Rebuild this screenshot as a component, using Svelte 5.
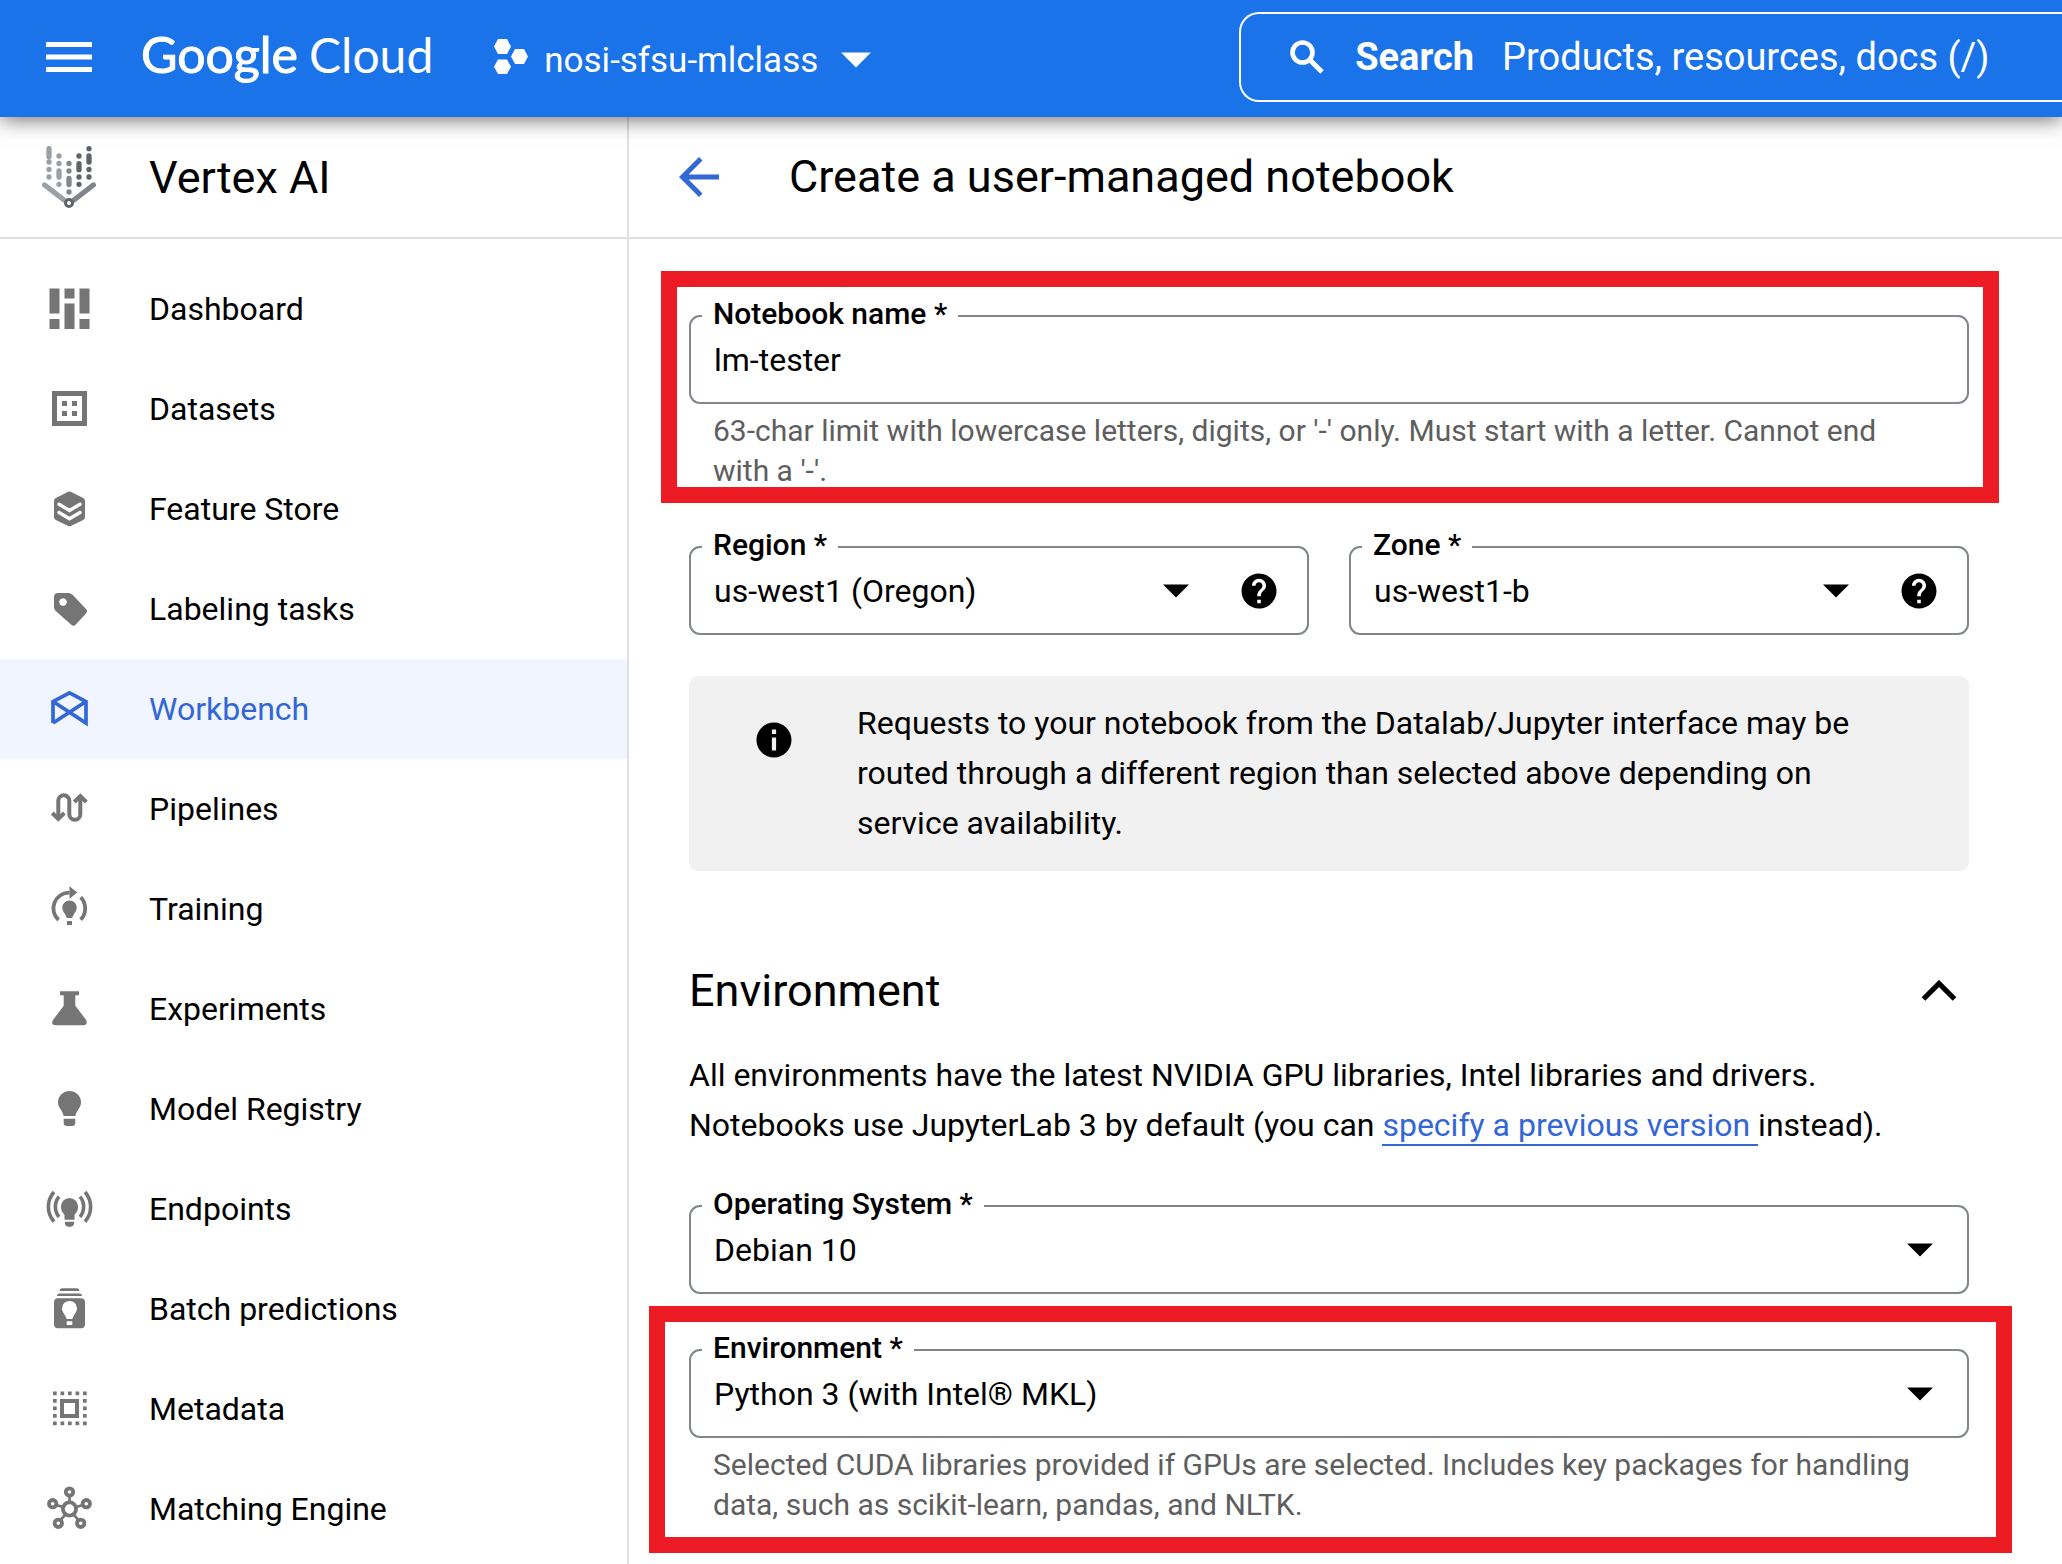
<script>
  const menu = [
    { name: 'Dashboard', icon: 'dashboard' },
    { name: 'Datasets', icon: 'datasets' },
    { name: 'Feature Store', icon: 'features' },
    { name: 'Labeling tasks', icon: 'label' },
    { name: 'Workbench', icon: 'workbench', active: true },
    { name: 'Pipelines', icon: 'pipelines' },
    { name: 'Training', icon: 'training' },
    { name: 'Experiments', icon: 'flask' },
    { name: 'Model Registry', icon: 'bulb' },
    { name: 'Endpoints', icon: 'endpoints' },
    { name: 'Batch predictions', icon: 'batch' },
    { name: 'Metadata', icon: 'metadata' },
    { name: 'Matching Engine', icon: 'matching' }
  ];

  // Dotted frame of the metadata icon: a 5 x 5 grid without its middle
  const frameDots = [];
  for (let r = 0; r < 5; r++) {
    for (let c = 0; c < 5; c++) {
      if (r === 0 || r === 4 || c === 0 || c === 4) {
        frameDots.push({ x: 8 + c * 7.5, y: 6.5 + r * 7.5 });
      }
    }
  }

  const nodes = [
    [24.5, 7],
    [7.7, 18.7],
    [41.3, 18.7],
    [13.3, 38.3],
    [35.7, 38.3]
  ];

  let notebookName = $state('lm-tester');
  let open = $state(true);
</script>

{#snippet arrow()}
  <svg class="arrow" viewBox="0 0 26 14" aria-hidden="true"><path d="M0 0.5h26L13 13.5z" /></svg>
{/snippet}

{#snippet help(text)}
  <button class="help" type="button" aria-label={text}>
    <svg viewBox="0 0 24 24" aria-hidden="true">
      <path
        d="M12 2C6.48 2 2 6.48 2 12s4.48 10 10 10 10-4.48 10-10S17.52 2 12 2zm1 17h-2v-2h2v2zm2.07-7.75l-.9.92C13.45 12.9 13 13.5 13 15h-2v-.5c0-1.1.45-2.1 1.17-2.83l1.24-1.26c.37-.36.59-.86.59-1.41 0-1.1-.9-2-2-2s-2 .9-2 2H8c0-2.21 1.79-4 4-4s4 1.79 4 4c0 .88-.36 1.68-.93 2.25z"
      />
    </svg>
  </button>
{/snippet}

{#snippet menuIcon(kind)}
  <svg class="menu-icon" viewBox="0 0 48 48" aria-hidden="true">
    {#if kind === 'dashboard'}
      <path d="M4.5 3.5h10v25h-10zM4.5 34h10v10h-10zM19.5 3.5h10v10h-10zM19.5 18.5h10V44h-10zM34.5 3.5h10v25h-10zM34.5 34h10v10h-10z" />
    {:else if kind === 'datasets'}
      <path d="M17 16h5v5h-5zM27 16h5v5h-5zM17 26h5v5h-5zM27 26h5v5h-5z" />
      <rect class="line" x="9.5" y="8.5" width="30" height="30" stroke-width="5" />
    {:else if kind === 'features'}
      <path d="M22.7 6.9q1.800-1 3.600 0L38.200 12.900q1.800 1 1.800 3V32q0 2-1.800 3L26.300 40.700q-1.800 1-3.600 0L10.800 35Q9 34 9 32V15.900q0-2 1.800-3z" />
      <path class="cut" d="M14 19.2l10.500 6.300L35 19.200M14 27.500l10.500 6.300L35 27.500" />
    {:else if kind === 'label'}
      <path
        fill-rule="evenodd"
        d="M13 8h10.500q2.200 0 3.800 1.600L41 24q2 2.200 0 4.400L30.600 39.800q-2.200 2-4.300 0L10.400 25.700Q9 24.300 9 22.300V12q0-4 4-4zM18 13.200a3.800 3.800 0 1 0 .01 0z"
      />
    {:else if kind === 'workbench'}
      <path class="line" stroke-width="3.7" d="M8 38V16.500L24.500 7.800 41 16.500V38L8 16.500M8 38L41 16.500" />
    {:else if kind === 'pipelines'}
      <path
        class="line"
        stroke-width="4"
        d="M13.3 34V15.800a5.500 5.500 0 0 1 11 0v13.400a5.500 5.500 0 0 0 11 0V11M7.300 28l6 6 6-6M29.300 17l6-6 6 6"
      />
    {:else if kind === 'training'}
      <path class="line" stroke-width="3.8" d="M13.5 35A15.700 15.700 0 0 1 24.500 7.700M35.700 12.200a16.500 16.500 0 0 1 0 22.600" />
      <path d="M24.5 1.200l7.800 6.300-7.800 6.300zM17.300 22.700a7.200 7.200 0 1 1 14.400 0c0 3-2 5-3.200 7.300L27 33h-5l-1.500-3c-1.200-2.300-3.200-4.300-3.200-7.300zM22 36h5v4h-5z" />
    {:else if kind === 'flask'}
      <path d="M15 6.300h19v4h-3.700v10.400L41.200 35q2 5.300-3 5.300H11q-5.500 0-3-5.300L18.700 20.700V10.300H15z" />
    {:else if kind === 'bulb'}
      <path d="M13 17.500a11.500 11.500 0 1 1 23 0c0 5.500-4.500 7.500-5.700 13.500H18.700C17.500 25 13 23 13 17.500zM18.700 33.700h11.600v4q0 3.300-3.300 3.300h-5q-3.300 0-3.300-3.300z" />
    {:else if kind === 'endpoints'}
      <path d="M15.900 21.700a8.600 8.600 0 1 1 17.200 0c0 4-2.300 6.500-3.600 8.300v4.700h-10V30c-1.300-1.800-3.600-4.300-3.600-8.300zM19.800 36.800h9.400q0 4.900-3.400 4.900h-2.600q-3.400 0-3.400-4.900z" />
      <path
        class="line"
        stroke-width="3.6"
        d="M14 11.700a16 16 0 0 0 0 20.300M35 11.700a16 16 0 0 1 0 20.300M9 7a22.400 22.400 0 0 0 0 29.700M40 7a22.400 22.400 0 0 1 0 29.700"
      />
    {:else if kind === 'batch'}
      <path d="M17 3.300h15q2.300 0 2.300 2.700H14.700Q14.700 3.300 17 3.300zM14.500 8.400h20q2.500 0 2.500 2.600H12q0-2.600 2.500-2.600z" />
      <path
        fill-rule="evenodd"
        d="M13 13.300h23q4 0 4 4v22q0 4-4 4H13q-4 0-4-4v-22q0-4 4-4zM17 23.400c0 3.500 3.300 6.300 4.700 10.600h5.600C28.700 29.700 32 26.900 32 23.400a7.500 7.500 0 1 0-15 0zM21.700 36.300h5.600V40h-5.600z"
      />
    {:else if kind === 'metadata'}
      {#each frameDots as d}
        <rect x={d.x} y={d.y} width="3.7" height="3.7" />
      {/each}
      <rect class="line" x="17" y="16" width="15" height="15" stroke-width="4" />
    {:else}
      <circle class="line" cx="24.5" cy="24" r="6.6" stroke-width="3.8" />
      {#each nodes as [x, y]}
        <circle class="line" cx={x} cy={y} r="3.7" stroke-width="3.8" />
      {/each}
      <path class="line" stroke-width="2.7" d="M24.500 11v6M12 20.200l6 1.800M37 20.200L31 22M16 34.500l4.500-5M33 34.500l-4.500-5" />
    {/if}
  </svg>
{/snippet}

<div class="page">
  <header class="topbar">
    <div class="brand">
      <button class="burger" type="button" aria-label="Navigation menu">
        <svg viewBox="0 0 46 32" aria-hidden="true"><path d="M0 1h46v5H0zM0 13.500h46v5H0zM0 26h46v5H0z" /></svg>
      </button>
      <a class="logo" href="#home"><span class="google">Google</span><span class="cloud">Cloud</span></a>
      <button class="project" type="button">
        <svg class="hexes" viewBox="0 0 34 36" aria-hidden="true">
          <path d="M4 0h9l4 7.500-4 7.500H4L0 7.500zM4 20.500h9l4 7.300-4 7.200H4L0 27.800zM21 10h9l4 7.500-4 7.500h-9l-4-7.500z" />
        </svg>
        <span>nosi-sfsu-mlclass</span>
        <svg class="down" viewBox="0 0 30 16" aria-hidden="true"><path d="M0 0.500h30L15 15.500z" /></svg>
      </button>
    </div>
    <div class="search">
      <svg viewBox="0 0 34 34" aria-hidden="true">
        <circle cx="12.5" cy="12.5" r="10" fill="none" stroke="#fff" stroke-width="4.6" />
        <path d="M20 20l12 12" stroke="#fff" stroke-width="5" />
      </svg>
      <label for="search">Search</label>
      <input id="search" type="text" placeholder="Products, resources, docs (/)" />
    </div>
  </header>

  <div class="body">
    <aside>
      <div class="product">
        <svg class="vertex" viewBox="0 0 54 62" aria-hidden="true">
          <g fill="none" stroke-width="5.3" stroke-linecap="round">
            <path stroke="#9aa0a6" d="M7 2.700v8M7 16v.01M7 23.500v.01M7 31v.01M17 10v.01M17 25v6M17 17.500v.01M17 38.300v.01M2.700 39L22 54" />
            <path stroke="#80868b" d="M27 17.500v.01M27 25v.01M27 32.500v6M27 46v.01M51.300 39L32 54" />
            <path stroke="#5f6368" d="M37 10v.01M37 17.700v6M37 31v.01M37 38.300v.01M47 2.700v.01M47 10v6M47 23.500v.01M47 31v.01" />
          </g>
          <circle cx="27" cy="57" r="3.5" fill="#fff" stroke="#5f6368" stroke-width="3" />
        </svg>
        <span>Vertex AI</span>
      </div>
      <nav aria-label="Vertex AI">
        {#each menu as item}
          <a class:active={item.active} aria-current={item.active ? 'page' : undefined} href="#{item.icon}">
            {@render menuIcon(item.icon)}
            <span>{item.name}</span>
          </a>
        {/each}
      </nav>
    </aside>

    <main>
      <div class="titlebar">
        <button class="back" type="button" aria-label="Back">
          <svg viewBox="0 0 40 40" aria-hidden="true">
            <path d="M40 17.500H9.600L23.500 3.500 20 0 0 20l20 20 3.500-3.500L9.600 22.500H40z" />
          </svg>
        </button>
        <h1>Create a user-managed notebook</h1>
      </div>

      <form onsubmit={(e) => e.preventDefault()}>
        <section class="mark mark-name">
          <div class="field">
            <label for="name">Notebook name *</label>
            <input id="name" type="text" aria-describedby="name-hint" bind:value={notebookName} />
          </div>
          <p class="hint" id="name-hint">
            63-char limit with lowercase letters, digits, or '-' only. Must start with a letter. Cannot end with a '-'.
          </p>
        </section>

        <div class="pair">
          <div class="field">
            <label for="region">Region *</label>
            <div class="picker">
              <select id="region"><option>us-west1 (Oregon)</option></select>
              {@render arrow()}
            </div>
            {@render help('About regions')}
          </div>
          <div class="field">
            <label for="zone">Zone *</label>
            <div class="picker">
              <select id="zone"><option>us-west1-b</option></select>
              {@render arrow()}
            </div>
            {@render help('About zones')}
          </div>
        </div>

        <div class="notice">
          <svg viewBox="0 0 24 24" aria-hidden="true">
            <path d="M12 2C6.480 2 2 6.480 2 12s4.480 10 10 10 10-4.480 10-10S17.520 2 12 2zm1.200 16h-2.400v-7.500h2.400V18zm0-9.500h-2.400V6h2.400v2.500z" />
          </svg>
          <p>
            Requests to your notebook from the Datalab/Jupyter interface may be routed through a different region than
            selected above depending on service availability.
          </p>
        </div>

        <div class="heading">
          <h2>Environment</h2>
          <button type="button" aria-label="Toggle environment section" aria-expanded={open} onclick={() => (open = !open)}>
            <svg viewBox="0 0 36 22" aria-hidden="true">
              <path d="M2.500 19L18 3.500 33.500 19" fill="none" stroke="#000" stroke-width="5.2" />
            </svg>
          </button>
        </div>

        {#if open}
          <p class="intro">
            All environments have the latest NVIDIA GPU libraries, Intel libraries and drivers. Notebooks use
            JupyterLab 3 by default (you can <a href="#version">specify a previous version&#32;</a>instead).
          </p>

          <div class="field">
            <label for="os">Operating System *</label>
            <div class="picker">
              <select id="os"><option>Debian 10</option></select>
              {@render arrow()}
            </div>
          </div>

          <section class="mark mark-env">
            <div class="field">
              <label for="env">Environment *</label>
              <div class="picker">
                <select id="env" aria-describedby="env-hint"><option>Python 3 (with Intel® MKL)</option></select>
                {@render arrow()}
              </div>
            </div>
            <p class="hint" id="env-hint">
              Selected CUDA libraries provided if GPUs are selected. Includes key packages for handling data, such as
              scikit-learn, pandas, and NLTK.
            </p>
          </section>
        {/if}
      </form>
    </main>
  </div>
</div>

<style>
  :global(body) {
    margin: 0;
    background: #fff;
  }

  .page {
    display: flex;
    flex-direction: column;
    min-height: 100vh;
    overflow: hidden;
    font-family: Roboto, 'Liberation Sans', sans-serif;
    font-size: 32px;
    color: #000;
  }

  .page *,
  .page {
    box-sizing: border-box;
  }

  svg {
    display: block;
    flex: none;
  }

  button {
    display: flex;
    align-items: center;
    padding: 0;
    border: 0;
    background: none;
    color: inherit;
    font: inherit;
    cursor: pointer;
  }

  h1,
  h2,
  p {
    margin: 0;
    font-weight: 400;
  }

  /* Top bar */
  .topbar {
    position: relative;
    z-index: 1;
    display: grid;
    grid-template-columns: 60% 1fr;
    column-gap: 2px;
    align-items: center;
    height: 117px;
    flex: none;
    padding-bottom: 3px;
    background: #1a73e8;
    box-shadow: 0 2px 20px rgba(0, 0, 0, 0.6);
    color: #fff;
  }

  .brand {
    display: flex;
    align-items: center;
    padding-left: 46px;
  }

  .burger svg {
    width: 46px;
    height: 32px;
    fill: #fff;
  }

  .logo {
    display: flex;
    align-items: baseline;
    gap: 11px;
    margin-left: 49px;
    padding-bottom: 6px;
    color: #fff;
    font-family: Lato, sans-serif;
    line-height: 60px;
    text-decoration: none;
  }

  .google {
    font-size: 50px;
    -webkit-text-stroke: 1px #fff;
  }

  .cloud {
    font-size: 48px;
  }

  .project {
    margin-left: 61px;
    font-size: 35px;
  }

  .hexes {
    width: 34px;
    height: 36px;
    margin-right: 16px;
    fill: #fff;
  }

  .project span {
    padding-top: 6px;
  }

  .down {
    width: 30px;
    height: 16px;
    margin: 6px 0 0 23px;
    fill: #fff;
  }

  .search {
    display: flex;
    align-items: center;
    height: 90px;
    padding-left: 49px;
    border: 2px solid #fff;
    border-right: 0;
    border-radius: 20px 0 0 20px;
    font-size: 38px;
  }

  .search svg {
    width: 34px;
    height: 34px;
  }

  .search label {
    margin-left: 31px;
    font-weight: 700;
  }

  .search input {
    flex: 1;
    min-width: 0;
    height: 100%;
    padding: 0;
    margin-left: 28px;
    border: 0;
    outline: 0;
    background: none;
    color: #fff;
    font: inherit;
  }

  .search input::placeholder {
    color: #fff;
    opacity: 1;
  }

  .body {
    display: flex;
    flex: 1;
  }

  /* Side navigation */
  aside {
    width: 629px;
    flex: none;
    border-right: 2px solid #e0e0e0;
  }

  .product,
  .titlebar {
    display: flex;
    align-items: center;
    height: 122px;
    border-bottom: 2px solid #e0e0e0;
    font-size: 45px;
  }

  .product {
    padding-left: 42px;
  }

  .vertex {
    width: 54px;
    height: 62px;
    margin-right: 53px;
  }

  nav {
    padding-top: 20px;
  }

  nav a {
    display: flex;
    align-items: center;
    gap: 56px;
    height: 100px;
    padding-left: 45px;
    color: #000;
    text-decoration: none;
  }

  nav a.active {
    background: #f0f5ff;
    color: #3367d6;
  }

  .menu-icon {
    width: 48px;
    height: 48px;
    fill: #757575;
    stroke: none;
  }

  .active .menu-icon {
    fill: #3367d6;
  }

  .menu-icon .line {
    fill: none;
    stroke: #757575;
  }

  .active .menu-icon .line {
    stroke: #3367d6;
  }

  .menu-icon .cut {
    fill: none;
    stroke: #fff;
    stroke-width: 3.4;
    stroke-linecap: round;
  }

  /* Main column */
  main {
    flex: 1;
    min-width: 0;
  }

  .titlebar {
    gap: 70px;
    padding-left: 50px;
  }

  .back svg {
    width: 40px;
    height: 40px;
    fill: #3367d6;
  }

  h1,
  h2 {
    font-size: 45px;
    line-height: 60px;
  }

  form {
    padding: 32px 93px 8px 60px;
  }

  .mark {
    border: 16px solid #ed1c24;
  }

  .mark-name {
    margin: 0 -30px 0 -28px;
    padding: 28px 14px 0 12px;
  }

  .mark-name .hint {
    margin-bottom: -4px;
  }

  .mark-env {
    margin: 12px -43px 0 -40px;
    padding: 27px 27px 12px 24px;
  }

  .field {
    position: relative;
    display: flex;
    align-items: center;
    height: 89px;
    border: 2px solid #80868b;
    border-radius: 11px;
  }

  .field label {
    position: absolute;
    top: -21px;
    left: 11px;
    padding: 0 11px;
    background: #fff;
    font-size: 30px;
    font-weight: 500;
    line-height: 36px;
  }

  .field input,
  .field select {
    width: 100%;
    height: 100%;
    margin: 0;
    padding: 0 23px;
    border: 0;
    border-radius: 10px;
    outline: 0;
    background: transparent;
    appearance: none;
    color: #000;
    font: inherit;
  }

  .picker {
    display: grid;
    flex: 1;
    align-items: center;
    height: 100%;
    min-width: 0;
  }

  .picker select,
  .arrow {
    grid-area: 1 / 1;
  }

  .arrow {
    justify-self: end;
    width: 26px;
    height: 14px;
    margin-right: 34px;
    pointer-events: none;
  }

  .help {
    margin-left: 15px;
    margin-right: 27px;
  }

  .help svg,
  .notice svg {
    width: 42px;
    height: 42px;
  }

  .hint {
    margin-top: 7px;
    padding: 0 40px 0 24px;
    color: #5e5e5e;
    font-size: 30px;
    line-height: 40px;
  }

  .pair {
    display: grid;
    grid-template-columns: 1fr 1fr;
    gap: 40px;
    margin: 43px 0 41px;
  }

  .notice {
    display: flex;
    gap: 62px;
    padding: 22px 48px 23px 64px;
    border-radius: 9px;
    background: #f1f1f1;
    line-height: 50px;
  }

  .notice svg {
    margin-top: 21px;
  }

  .heading {
    display: flex;
    align-items: center;
    justify-content: space-between;
    margin: 90px 0 29px;
    padding-right: 12px;
  }

  .heading svg {
    width: 36px;
    height: 22px;
  }

  .intro {
    margin-bottom: 55px;
    padding-right: 40px;
    line-height: 50px;
  }

  .intro a {
    border-bottom: 2px solid #3367d6;
    color: #3367d6;
    text-decoration: none;
  }
</style>
